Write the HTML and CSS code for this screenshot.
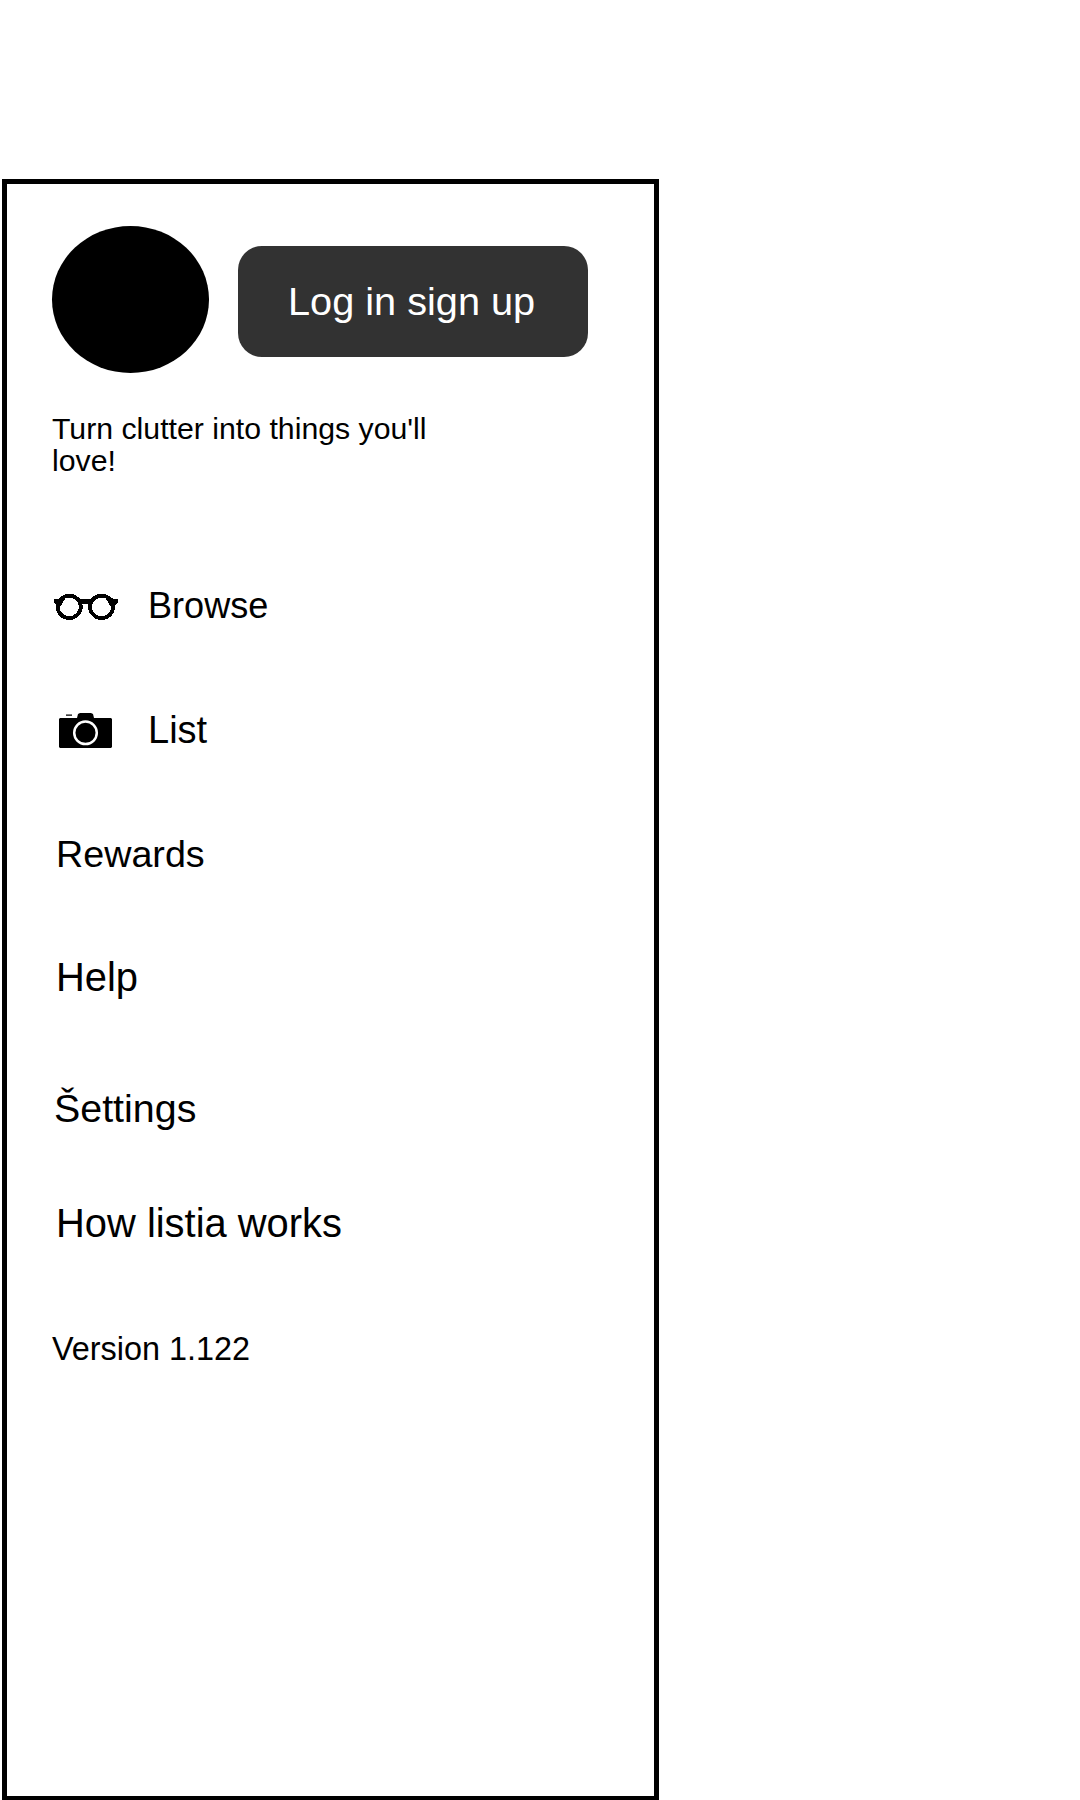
FILE: index.html
```html
<!DOCTYPE html>
<html lang="en">
<head>
<meta charset="utf-8">
<title>Menu</title>
<link rel="stylesheet" href="styles.css">
</head>
<body>
<aside class="drawer">
  <header class="account">
    <div class="avatar"></div>
    <button class="login">Log in sign up</button>
  </header>
  <p class="tagline">Turn clutter into things you'll<br>love!</p>
  <nav class="menu">
    <a class="item browse">
      <svg class="icon" width="68" height="46" viewBox="0 0 68 46" shape-rendering="crispEdges">
        <g fill="none" stroke="#000" stroke-width="3.8"><ellipse cx="17.3" cy="23.9" rx="11.5" ry="11.2"/><ellipse cx="49.6" cy="23.9" rx="11.5" ry="11.2"/></g>
        <path d="M2 16h4l5-3 2 3-5 8H5l-1-3-2-1zM66 16h-4l-6-3-2 3 5 8h4l1-3 2-1zM25 14l4 2h9l4-2v4l-3 4-2-1h-7l-2 1-3-4z"/>
      </svg>
      <span>Browse</span>
    </a>
    <a class="item list">
      <svg class="icon" width="68" height="46" viewBox="0 0 68 46">
        <path d="M14 7.5h6v1.2h-6zM8 11h17l1-4 2-1h11l2 1 1 4h17l1 1v28l-1 1H8l-1-1V12z"/>
        <circle cx="33.5" cy="25.8" r="11.3" fill="none" stroke="#fff" stroke-width="2.5"/>
      </svg>
      <span>List</span>
    </a>
    <a class="item rewards">Rewards</a>
    <a class="item help">Help</a>
    <a class="item settings">Šettings</a>
    <a class="item how">How listia works</a>
  </nav>
  <p class="version">Version 1.122</p>
</aside>
</body>
</html>
```
FILE: styles.css
```css
* { box-sizing: border-box; }
body {
  margin: 0;
  padding: 179px 0 0 2px;
  height: 1800px;
  overflow: hidden;
  background: #fff;
  color: #000;
  font-family: "Liberation Sans", Arial, sans-serif;
}
.drawer {
  width: 657px;
  height: 1621px;
  padding: 42px 45px 0;
  border: 5px solid #000;
  border-bottom-width: 4px;
}
.account {
  display: flex;
  align-items: flex-start;
  gap: 29px;
  height: 147px;
}
.avatar {
  width: 157px;
  height: 147px;
  border-radius: 50%;
  background: #000;
}
.login {
  width: 350px;
  height: 111px;
  margin-top: 20px;
  padding: 0 0 0 50px;
  border: 0;
  border-radius: 24px;
  background: #323232;
  color: #fff;
  font: 39.7px/109px "Liberation Sans", Arial, sans-serif;
  text-align: left;
}
.tagline {
  height: 64px;
  margin: 40px 0 0;
  font-size: 30.25px;
  line-height: 32px;
  white-space: nowrap;
}
.menu {
  display: flex;
  flex-direction: column;
  margin-top: 106px;
}
.item {
  display: flex;
  height: 46px;
  padding-left: 4px;
  font-size: 39.9px;
  line-height: 46px;
  white-space: nowrap;
}
.icon {
  flex: none;
  margin: 0 28px 0 -4px;
}
.browse { font-size: 36.1px; }
.list { margin-top: 78px; font-size: 38px; }
.rewards { margin-top: 78px; font-size: 37.7px; }
.help { margin-top: 77px; }
.settings { margin-top: 85px; padding-left: 2px; font-size: 39.4px; }
.how { margin-top: 69px; }
.version {
  margin: 80px 0 0;
  font-size: 32.4px;
  line-height: 46px;
}
```
